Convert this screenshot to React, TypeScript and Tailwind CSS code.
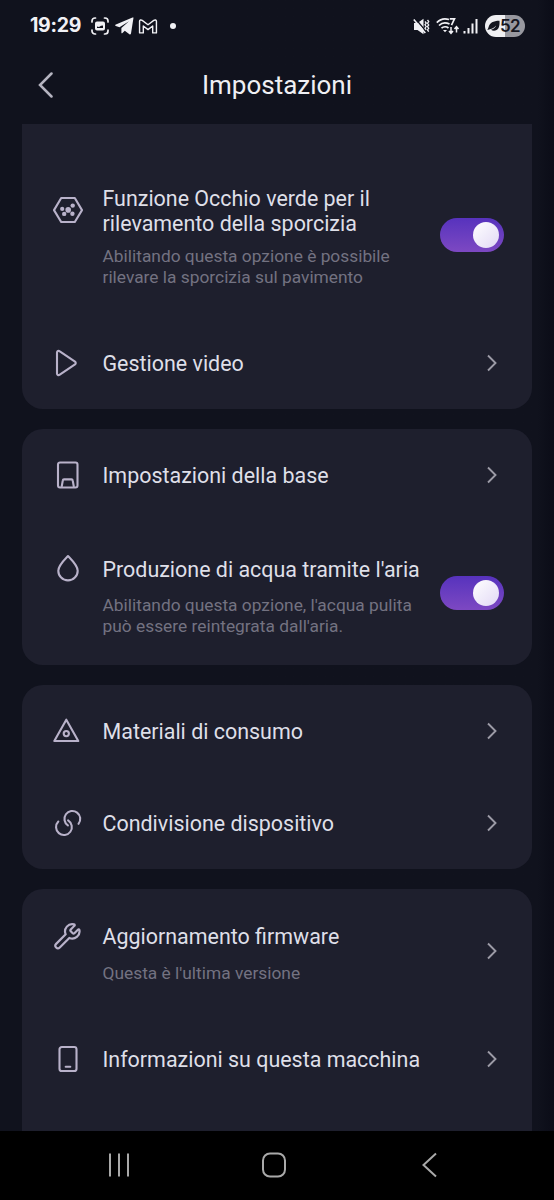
import type { ReactNode } from "react";

const DirtIcon = () => (
  <svg viewBox="0 0 32 28" className="h-7 w-8" fill="none" stroke="currentColor" strokeWidth="2.1" strokeLinejoin="round">
    <path d="M9.2 2h13.6L30 14.1l-7.2 11.9H9.2L2 14.1z" />
    <g fill="currentColor" stroke="none">
      <circle cx="16.2" cy="13.9" r="2.8" />
      <circle cx="10.2" cy="12.9" r="2.1" />
      <circle cx="20.7" cy="9.6" r="2.2" />
      <circle cx="12.2" cy="17.9" r="2.2" />
      <circle cx="20.4" cy="17.7" r="2.2" />
    </g>
  </svg>
);

const PlayIcon = () => (
  <svg viewBox="0 0 32 28" className="h-7 w-8" fill="none" stroke="currentColor" strokeWidth="2.1" strokeLinejoin="round">
    <path d="M5 3.600v20.800c0 1.600 1.400 2.200 2.800 1.200L23 15.400c1-.8 1-2 0-2.800L7.800 2.400C6.400 1.400 5 2 5 3.600z" />
  </svg>
);

const BaseIcon = () => (
  <svg viewBox="0 0 32 28" className="h-7 w-8" fill="none" stroke="currentColor" strokeWidth="2.1" strokeLinejoin="round">
    <rect x="6" y="1.500" width="19.500" height="25" rx="2" />
    <path d="M9.600 26l1.200-6.500c.1-.8.600-1.100 1.200-1.100h7.500c.700 0 1.100.4 1.200 1.100L21.900 26" />
  </svg>
);

const DropIcon = () => (
  <svg viewBox="0 0 32 28" className="h-7 w-8" fill="none" stroke="currentColor" strokeWidth="2.1" strokeLinejoin="round">
    <path d="M16 2c3.500 3.700 9.700 9.500 9.700 14.700a9.700 9.700 0 0 1-19.400 0C6.300 11.500 12.500 5.700 16 2z" />
  </svg>
);

const ConsumablesIcon = () => (
  <svg viewBox="0 0 32 28" className="h-7 w-8" fill="none" stroke="currentColor" strokeWidth="2.1" strokeLinejoin="round">
    <path d="M14.300 2.700L26.300 24H2.300z" />
    <circle cx="14.300" cy="16.600" r="2.600" />
  </svg>
);

const ShareIcon = () => (
  <svg viewBox="0 0 32 28" className="h-7 w-8" fill="none" stroke="currentColor" strokeWidth="2.1" strokeLinecap="round">
    <path d="M26.500 14.800A7.900 7.900 0 1 0 15.900 16.400" />
    <path d="M6.300 12.600A7.900 7.900 0 1 0 16.100 11.400" />
  </svg>
);

const WrenchIcon = () => (
  <svg viewBox="0 0 24 24" className="ml-[1px] h-[29px] w-[29px]" fill="none" stroke="currentColor" strokeWidth="1.800" strokeLinejoin="round">
    <path d="M14.700 6.300a1 1 0 0 0 0 1.400l1.600 1.600a1 1 0 0 0 1.400 0l3.100-3.100c.3-.3.900-.2 1 .2a6 6 0 0 1-8.300 6.800l-7.900 7.900a1 1 0 0 1-3-3l7.900-7.900a6 6 0 0 1 7.100-8.200c.4.100.5.700.2 1z" />
  </svg>
);

const DeviceIcon = () => (
  <svg viewBox="0 0 32 28" className="h-7 w-8" fill="none" stroke="currentColor" strokeWidth="2.1" strokeLinecap="round">
    <rect x="7.500" y="2" width="17" height="24" rx="2.300" />
    <path d="M13.700 21.800h4.600" />
  </svg>
);

const Toggle = () => (
  <button
    role="switch"
    aria-checked="true"
    className="mr-7 flex h-[34px] w-16 shrink-0 items-center justify-end rounded-full bg-gradient-to-b from-[#5732bd] to-[#7d48c2] pr-[5px]"
  >
    <span className="size-[26px] rounded-full bg-gradient-to-br from-white to-[#e2d9f5]" />
  </button>
);

const Chevron = () => (
  <svg viewBox="0 0 12 18" className="mr-[34px] h-[18px] w-3 shrink-0 text-[#9c9ba6]" fill="none" stroke="currentColor" strokeWidth="1.900">
    <path d="M2 1.500l7.500 7.500L2 16.500" />
  </svg>
);

type RowProps = {
  icon: ReactNode;
  title: ReactNode;
  note?: ReactNode;
  toggle?: boolean;
  className: string;
  iconClass?: string;
  titleClass?: string;
  noteClass?: string;
};

const Row = ({ icon, title, note, toggle, className, iconClass = "", titleClass = "pt-[2px]", noteClass = "mt-[14px]" }: RowProps) => (
  <div className={`flex items-center ${className}`}>
    <div className={`flex flex-1 items-start ${note ? "pt-1" : ""}`}>
      <span className={`ml-[30px] mr-[18.5px] w-8 shrink-0 text-[#b9b2ca] ${iconClass}`}>{icon}</span>
      <div className="whitespace-nowrap">
        <h2 className={`text-[21.450px] leading-[25px] text-[#dfdfe8] ${titleClass}`}>{title}</h2>
        {note && <p className={`text-[17.350px] leading-[21px] text-[#737281] ${noteClass}`}>{note}</p>}
      </div>
    </div>
    {toggle ? <Toggle /> : <Chevron />}
  </div>
);

const StatusBar = () => (
  <div className="flex h-[50px] shrink-0 items-center pl-[30px] pr-[29px] pt-[2px] text-[#f1f1f5]">
    <span className="w-[61px] font-['Inter'] text-[19.500px] font-bold tracking-[-0.3px]">19:29</span>
    {/* Screenshot */}
    <svg viewBox="0 0 18 18" className="h-[18px] w-[18px]" fill="none" stroke="currentColor" strokeWidth="1.700" strokeLinecap="round">
      <path d="M1 5V4a3 3 0 0 1 3-3h.5M13.500 1h.5a3 3 0 0 1 3 3v1M17 13v1a3 3 0 0 1-3 3h-.5M4.500 17H4a3 3 0 0 1-3-3v-1" />
      <path fillRule="evenodd" fill="currentColor" stroke="none" d="M6 4.500h6a2 2 0 0 1 2 2v5a2 2 0 0 1-2 2H6a2 2 0 0 1-2-2v-5a2 2 0 0 1 2-2zM6 11h6V8.500l-2 .2-2 1.400-2-.6z" />
    </svg>
    {/* Telegram */}
    <svg viewBox="0 0 19 18" className="ml-[6px] h-[18px] w-[19px]" fill="currentColor">
      <path d="M18.500.8L16 16.500c-.2.900-.9 1.200-1.600.8L9.800 13.800l-2.600 2.400c-.4.300-.8.100-.8-.5V11l7.600-6.800L4.500 10.200.8 9c-.8-.3-.8-1.200.1-1.500L17.500.5c.7-.2 1.100-.1 1 .3z" />
    </svg>
    {/* Gmail */}
    <svg viewBox="0 0 20 16" className="ml-[4px] h-[15px] w-[20px]" fill="none" stroke="currentColor" strokeWidth="1.500" strokeLinejoin="round">
      <path d="M1 2.500C1 1 2.600.6 3.800 1.500L10 6.200l6.200-4.700C17.400.6 19 1 19 2.500v12.300h-4V7.500l-5 3.800-5-3.800v7.300H1z" />
    </svg>
    <span className="ml-3 size-[6px] rounded-full bg-current" />
    <div className="ml-auto flex items-center">
      {/* Muted with vibration */}
      <svg viewBox="0 0 17 17" className="h-[17px] w-[17px]" fill="none" stroke="currentColor" strokeWidth="1.500">
        <path fill="currentColor" stroke="none" d="M1 5h3.500L10.500.8v15.400l-6-4.200H1z" />
        <path stroke="#10121d" strokeWidth="1.300" d="M2.200.5l11 13" />
        <path strokeWidth="1.600" d="M.8 1.500l11.500 13.500" />
        <path strokeWidth="1.300" d="M12 3.500l1.200 1.500L12 6.800l1.200 1.700L12 10.200l1.200 1.600M14.500 2l1.200 1.600-1.200 1.700L15.700 7l-1.200 1.600 1.200 1.700-1.200 1.600 1.200 1.700" />
      </svg>
      {/* Wi-Fi 7 */}
      <svg viewBox="0 0 24 18" className="ml-[6px] h-[18px] w-6" fill="none" stroke="currentColor" strokeWidth="1.700">
        <path d="M.8 5.600C4 2.200 9 1.200 13 2.500M3 8.500c3-3 7-3.300 10.500-1.400M5.500 11.200c2-1.800 5-1.900 7-.2" />
        <path fill="currentColor" stroke="none" d="M7 13h4l-2 2.200z" />
        <path strokeWidth="1.700" d="M13.800 1.800h4.700l-3 6.400" />
        <path strokeWidth="1.500" d="M15 10v6M13 14l2 2.300 2-2.300M20.500 15.500V10M18.500 12l2-2.300 2 2.300" />
      </svg>
      <svg viewBox="0 0 15 16" className="ml-[3px] h-4 w-[15px]" fill="none" stroke="currentColor" strokeWidth="2">
        <path d="M1.500 13v2.500M5.500 10v5.500M9.500 5.500v10M13.500 1v14.500" />
      </svg>
      <div className="ml-[7px] flex h-[22px] w-10 items-center rounded-full bg-gradient-to-r from-[#efeff2] from-50% to-[#98989f] to-50% pl-[2px] text-[#15161f]">
        <svg viewBox="0 0 13 12" className="h-3 w-[13px] shrink-0" fill="currentColor">
          <path d="M12.500.8c.5 6.500-1.500 10-5.500 10-1.200 0-2.200-.4-3-1C7 9 8.500 7.300 9.200 5.500 7 8 4 9.200.3 10 1 9 1 8.500 1.600 7 2.800 3 6 .8 12.500.8z" />
        </svg>
        <span className="font-['Inter'] text-[17px] font-semibold leading-none tracking-[-0.800px]">52</span>
      </div>
    </div>
  </div>
);

export default function App() {
  return (
    <div className="flex h-[1200px] w-[554px] flex-col overflow-hidden bg-gradient-to-r from-[#10121d] from-[97%] to-[#0b0c17] font-['Roboto',sans-serif]">
      <StatusBar />

      {/* Header */}
      <header className="grid h-[74px] shrink-0 grid-cols-[60px_1fr_60px] items-center pb-[4px]">
        <svg viewBox="0 0 16 26" className="ml-[38px] h-[26px] w-4 text-[#b5b4c0]" fill="none" stroke="currentColor" strokeWidth="2.500" strokeLinecap="round">
          <path d="M13.500 1.500L2 13l11.500 11.500" />
        </svg>
        <h1 className="text-center text-[26px] leading-[30px] text-[#efeff4]">Impostazioni</h1>
      </header>

      {/* Settings list */}
      <main className="flex h-[1007px] shrink-0 flex-col gap-5 overflow-hidden px-[22px]">
        <section className="h-[285px] shrink-0 rounded-b-[21px] bg-[#1e1f2d] pt-[60px]">
          <Row
            className="h-[101px]"
            iconClass="pt-[11px]"
            titleClass="pt-px"
            noteClass="mt-[10px]"
            icon={<DirtIcon />}
            title={<>Funzione Occhio verde per il<br />rilevamento della sporcizia</>}
            note={<>Abilitando questa opzione è possibile<br />rilevare la sporcizia sul pavimento</>}
            toggle
          />
          <Row className="mt-[62px] h-8" icon={<PlayIcon />} title="Gestione video" />
        </section>

        <section className="h-[236px] shrink-0 rounded-[21px] bg-[#1e1f2d] pt-[30px]">
          <Row className="h-8" icon={<BaseIcon />} title="Impostazioni della base" />
          <Row
            className="mt-[61px] h-[82px]"
            titleClass="pt-[3px]"
            noteClass="mt-[13px]"
            icon={<DropIcon />}
            title="Produzione di acqua tramite l'aria"
            note={<>Abilitando questa opzione, l'acqua pulita<br />può essere reintegrata dall'aria.</>}
            toggle
          />
        </section>

        <section className="h-[184px] shrink-0 rounded-[21px] bg-[#1e1f2d] pt-[30px]">
          <Row className="h-8" icon={<ConsumablesIcon />} title="Materiali di consumo" />
          <Row className="mt-[60px] h-8" icon={<ShareIcon />} title="Condivisione dispositivo" />
        </section>

        <section className="h-[242px] shrink-0 rounded-t-[21px] bg-[#1e1f2d] pt-[32px]">
          <Row className="h-[60px]" icon={<WrenchIcon />} title="Aggiornamento firmware" note="Questa è l'ultima versione" />
          <Row className="mt-[62px] h-8" icon={<DeviceIcon />} title="Informazioni su questa macchina" />
        </section>
      </main>

      {/* System navigation */}
      <nav className="flex flex-1 items-start bg-black pt-[21px] text-[#a9a9a9]">
        <svg viewBox="0 0 24 26" className="ml-[107px] h-[26px] w-6" fill="none" stroke="currentColor" strokeWidth="2">
          <path d="M3 1.500v23M12 1.500v23M21 1.500v23" />
        </svg>
        <svg viewBox="0 0 26 26" className="ml-[130px] h-[26px] w-[26px]" fill="none" stroke="currentColor" strokeWidth="2">
          <rect x="2" y="1.500" width="22" height="23" rx="7" />
        </svg>
        <svg viewBox="0 0 18 26" className="ml-[133px] h-[26px] w-[18px]" fill="none" stroke="currentColor" strokeWidth="2">
          <path d="M16 1.500L3.500 13 16 24.500" />
        </svg>
      </nav>
    </div>
  );
}
